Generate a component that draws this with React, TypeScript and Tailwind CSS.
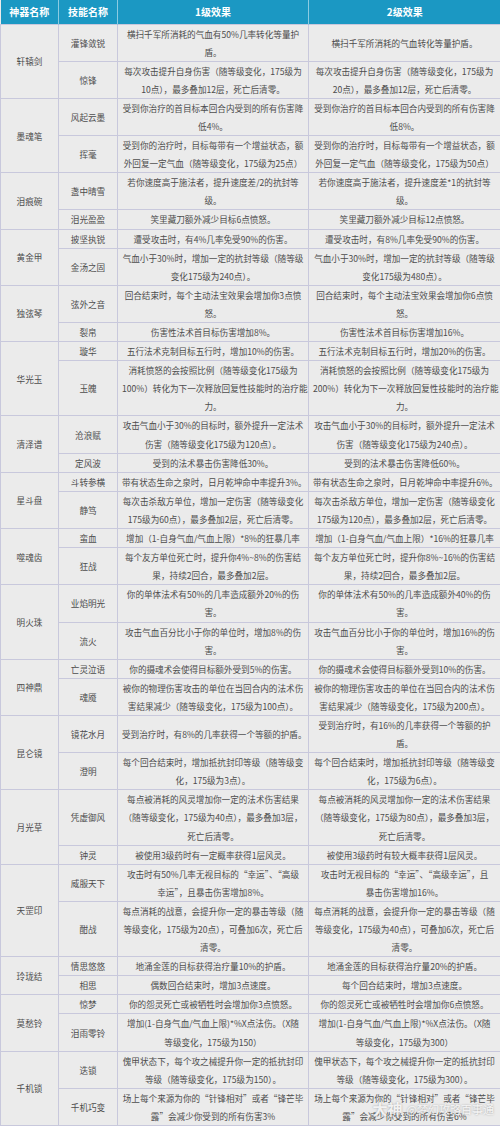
import React from 'react';

type Skill = { name: string; l1: string[]; l2: string[] };
type Item = { name: string; skills: Skill[] };

const items: Item[] = [
  {
    name: '轩辕剑',
    skills: [
      { name: '灌锋敛锐', l1: ['横扫千军所消耗的气血有50%几率转化等量护', '盾。'], l2: ['横扫千军所消耗的气血转化等量护盾。'] },
      {
        name: '惊锋',
        l1: ['每次攻击提升自身伤害（随等级变化，175级为', '10点），最多叠加12层，死亡后清零。'],
        l2: ['每次攻击提升自身伤害（随等级变化，175级为', '20点），最多叠加12层，死亡后清零。'],
      },
    ],
  },
  {
    name: '墨魂笔',
    skills: [
      { name: '风起云墨', l1: ['受到你治疗的首目标本回合内受到的所有伤害降', '低4%。'], l2: ['受到你治疗的首目标本回合内受到的所有伤害降', '低8%。'] },
      {
        name: '挥毫',
        l1: ['受到你的治疗时，目标每带有一个增益状态，额', '外回复一定气血（随等级变化，175级为25点）'],
        l2: ['受到你的治疗时，目标每带有一个增益状态，额', '外回复一定气血（随等级变化，175级为50点）'],
      },
    ],
  },
  {
    name: '泪痕碗',
    skills: [
      { name: '盏中晴雪', l1: ['若你速度高于施法者，提升速度差/2的抗封等', '级。'], l2: ['若你速度高于施法者，提升速度差*1的抗封等', '级。'] },
      { name: '泪光盈盈', l1: ['笑里藏刀额外减少目标6点愤怒。'], l2: ['笑里藏刀额外减少目标12点愤怒。'] },
    ],
  },
  {
    name: '黄金甲',
    skills: [
      { name: '披坚执锐', l1: ['遭受攻击时，有4%几率免受90%的伤害。'], l2: ['遭受攻击时，有8%几率免受90%的伤害。'] },
      {
        name: '金汤之固',
        l1: ['气血小于30%时，增加一定的抗封等级（随等级', '变化175级为240点）。'],
        l2: ['气血小于30%时，增加一定的抗封等级（随等级', '变化175级为480点）。'],
      },
    ],
  },
  {
    name: '独弦琴',
    skills: [
      { name: '弦外之音', l1: ['回合结束时，每个主动法宝效果会增加你3点愤', '怒。'], l2: ['回合结束时，每个主动法宝效果会增加你6点愤', '怒。'] },
      { name: '裂帛', l1: ['伤害性法术首目标伤害增加8%。'], l2: ['伤害性法术首目标伤害增加16%。'] },
    ],
  },
  {
    name: '华光玉',
    skills: [
      { name: '璇华', l1: ['五行法术克制目标五行时，增加10%的伤害。'], l2: ['五行法术克制目标五行时，增加20%的伤害。'] },
      {
        name: '玉魄',
        l1: ['消耗愤怒的会按照比例（随等级变化175级为', '100%）转化为下一次释放回复性技能时的治疗能', '力。'],
        l2: ['消耗愤怒的会按照比例（随等级变化175级为', '200%）转化为下一次释放回复性技能时的治疗能', '力。'],
      },
    ],
  },
  {
    name: '清泽谱',
    skills: [
      {
        name: '沧浪赋',
        l1: ['攻击气血小于30%的目标时，额外提升一定法术', '伤害（随等级变化175级为120点）。'],
        l2: ['攻击气血小于30%的目标时，额外提升一定法术', '伤害（随等级变化175级为240点）。'],
      },
      { name: '定风波', l1: ['受到的法术暴击伤害降低30%。'], l2: ['受到的法术暴击伤害降低60%。'] },
    ],
  },
  {
    name: '星斗盘',
    skills: [
      { name: '斗转参横', l1: ['带有状态生命之泉时，日月乾坤命中率提升3%。'], l2: ['带有状态生命之泉时，日月乾坤命中率提升6%。'] },
      {
        name: '静笃',
        l1: ['每次击杀敌方单位，增加一定伤害（随等级变化', '175级为60点），最多叠加2层，死亡后清零。'],
        l2: ['每次击杀敌方单位，增加一定伤害（随等级变化', '175级为120点），最多叠加2层，死亡后清零。'],
      },
    ],
  },
  {
    name: '噬魂齿',
    skills: [
      { name: '蛮血', l1: ['增加（1-自身气血/气血上限）*8%的狂暴几率'], l2: ['增加（1-自身气血/气血上限）*16%的狂暴几率'] },
      {
        name: '狂战',
        l1: ['每个友方单位死亡时，提升你4%~8%的伤害结', '果，持续2回合，最多叠加2层。'],
        l2: ['每个友方单位死亡时，提升你8%~16%的伤害结', '果，持续2回合，最多叠加2层。'],
      },
    ],
  },
  {
    name: '明火珠',
    skills: [
      { name: '业焰明光', l1: ['你的单体法术有50%的几率造成额外20%的伤', '害。'], l2: ['你的单体法术有50%的几率造成额外40%的伤', '害。'] },
      { name: '流火', l1: ['攻击气血百分比小于你的单位时，增加8%的伤', '害。'], l2: ['攻击气血百分比小于你的单位时，增加16%的伤', '害。'] },
    ],
  },
  {
    name: '四神鼎',
    skills: [
      { name: '亡灵泣语', l1: ['你的摄魂术会使得目标额外受到5%的伤害。'], l2: ['你的摄魂术会使得目标额外受到10%的伤害。'] },
      {
        name: '魂魇',
        l1: ['被你的物理伤害攻击的单位在当回合内的法术伤', '害结果减少（随等级变化，175级为100点）。'],
        l2: ['被你的物理伤害攻击的单位在当回合内的法术伤', '害结果减少（随等级变化，175级为200点）。'],
      },
    ],
  },
  {
    name: '昆仑镜',
    skills: [
      { name: '镜花水月', l1: ['受到治疗时，有8%的几率获得一个等额的护盾。'], l2: ['受到治疗时，有16%的几率获得一个等额的护', '盾。'] },
      {
        name: '澄明',
        l1: ['每个回合结束时，增加抵抗封印等级（随等级变', '化，175级为3点）。'],
        l2: ['每个回合结束时，增加抵抗封印等级（随等级变', '化，175级为6点）。'],
      },
    ],
  },
  {
    name: '月光草',
    skills: [
      {
        name: '凭虚御风',
        l1: ['每点被消耗的风灵增加你一定的法术伤害结果', '（随等级变化，175级为40点），最多叠加3层，', '死亡后清零。'],
        l2: ['每点被消耗的风灵增加你一定的法术伤害结果', '（随等级变化，175级为80点），最多叠加3层，', '死亡后清零。'],
      },
      { name: '钟灵', l1: ['被使用3级药时有一定概率获得1层风灵。'], l2: ['被使用3级药时有较大概率获得1层风灵。'] },
    ],
  },
  {
    name: '天罡印',
    skills: [
      {
        name: '威服天下',
        l1: ['攻击时有50%几率无视目标的“幸运”、“高级', '幸运”，且暴击伤害增加8%。'],
        l2: ['攻击时无视目标的“幸运”、“高级幸运”，且', '暴击伤害增加16%。'],
      },
      {
        name: '酣战',
        l1: ['每点消耗的战意，会提升你一定的暴击等级（随', '等级变化，175级为20点），可叠加6次，死亡后', '清零。'],
        l2: ['每点消耗的战意，会提升你一定的暴击等级（随', '等级变化，175级为40点），可叠加6次，死亡后', '清零。'],
      },
    ],
  },
  {
    name: '玲珑结',
    skills: [
      { name: '情思悠悠', l1: ['地涌金莲的目标获得治疗量10%的护盾。'], l2: ['地涌金莲的目标获得治疗量20%的护盾。'] },
      { name: '相思', l1: ['偶数回合结束时，增加3点速度。'], l2: ['每个回合结束时，增加3点速度。'] },
    ],
  },
  {
    name: '莫愁铃',
    skills: [
      { name: '惊梦', l1: ['你的怨灵死亡或被牺牲时会增加你3点愤怒。'], l2: ['你的怨灵死亡或被牺牲时会增加你6点愤怒。'] },
      {
        name: '泪雨零铃',
        l1: ['增加(1-自身气血/气血上限)*%X点法伤。（X随', '等级变化，175级为150）'],
        l2: ['增加(1-自身气血/气血上限)*%X点法伤。（X随', '等级变化，175级为300）'],
      },
    ],
  },
  {
    name: '千机锁',
    skills: [
      {
        name: '迭锁',
        l1: ['傀甲状态下，每个攻之械提升你一定的抵抗封印', '等级（随等级变化，175级为150）。'],
        l2: ['傀甲状态下，每个攻之械提升你一定的抵抗封印', '等级（随等级变化，175级为300）。'],
      },
      {
        name: '千机巧变',
        l1: ['场上每个来源为你的“针锋相对”或者“锋芒毕', '露”会减少你受到的所有伤害3%'],
        l2: ['场上每个来源为你的“针锋相对”或者“锋芒毕', '露”会减少你受到的所有伤害6%'],
      },
    ],
  },
];

const cell = 'border border-[#c8c8dc] px-1 py-0 text-center align-middle whitespace-nowrap';

function Lines({ lines }: { lines: string[] }) {
  return (
    <>
      {lines.map((l, i) => (
        <div key={i}>{l}</div>
      ))}
    </>
  );
}

export default function App() {
  return (
    <div
      className="relative w-[500px] bg-white"
      style={{ fontFamily: '"Noto Sans CJK SC", "Noto Sans", sans-serif' }}
    >
      <table className="w-[500px] table-fixed border-collapse bg-[#ebebeb] text-[8.6px] leading-[18.1px] text-[#4d4d4d]">
        <colgroup>
          <col className="w-[58px]" />
          <col className="w-[59px]" />
          <col className="w-[191px]" />
          <col className="w-[192px]" />
        </colgroup>
        <thead>
          <tr className="h-[24px] bg-[#1b98c3] text-[10px] font-bold text-white">
            <th className="border-r border-[#8ccbe2] text-center">神器名称</th>
            <th className="border-r border-[#8ccbe2] text-center">技能名称</th>
            <th className="border-r border-[#8ccbe2] text-center">1级效果</th>
            <th className="text-center">2级效果</th>
          </tr>
        </thead>
        <tbody>
          {items.map((item) =>
            item.skills.map((s, i) => (
              <tr key={item.name + s.name}>
                {i === 0 && (
                  <td rowSpan={item.skills.length} className={cell}>
                    {item.name}
                  </td>
                )}
                <td className={cell}>{s.name}</td>
                <td className={cell}>
                  <Lines lines={s.l1} />
                </td>
                <td className={cell}>
                  <Lines lines={s.l2} />
                </td>
              </tr>
            ))
          )}
        </tbody>
      </table>

      {/* watermark */}
      <div className="pointer-events-none absolute bottom-[6px] right-[6px] flex items-center gap-1 text-white/85 [text-shadow:0_0_2px_rgba(0,0,0,0.35)]">
        <span className="text-[15px] font-bold">大神</span>
        <span className="text-[11px]">@梦幻攻略百事通</span>
      </div>
    </div>
  );
}
